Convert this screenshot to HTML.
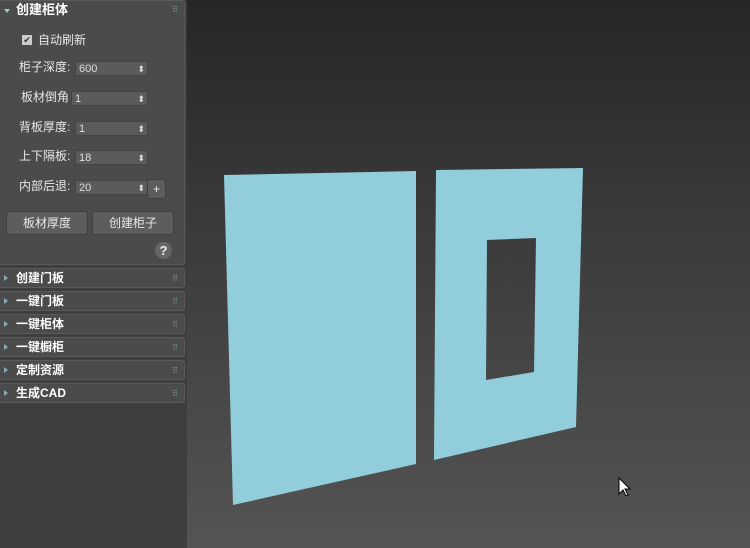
<!DOCTYPE html><html><head><style>
body{margin:0;width:750px;height:548px;overflow:hidden;font-family:"Liberation Sans","Noto Sans CJK SC",sans-serif;position:relative;background:#3c3c3c}
.vp{position:absolute;left:187px;top:0;width:563px;height:548px;background:linear-gradient(#262626,#3a3a3a 40%,#545454)}
.side{position:absolute;left:0;top:0;width:187px;height:548px;background:#3e3e3e}
.p{position:absolute;left:0;width:185px;background:#4b4b4b;border:1px solid #5a5a5a;border-left:none;box-sizing:border-box;border-radius:0 3px 3px 0}
.h{position:absolute;left:16px;color:#fff;font-weight:bold;font-size:12px;line-height:18px;top:0}
.tri{position:absolute;left:4px;width:0;height:0}
.dots{position:absolute;right:7px;color:#7a9aa0;font-size:8px;letter-spacing:-1px}
.lbl{position:absolute;color:#e8e8e8;font-size:12px;line-height:16px}
.in{position:absolute;height:13px;background:#5b5b5b;border:1px solid #444;color:#ddd;font-size:11px;line-height:14px;padding-left:3px;box-sizing:content-box}
.in:after{content:"⬍";position:absolute;right:2px;top:0;font-size:9px;color:#ddd}
.btn{position:absolute;height:22px;background:#5d5d5d;border:1px solid #3f3f3f;border-radius:3px;color:#e8e8e8;font-size:12px;text-align:center;line-height:22px}
</style></head><body>
<div class="vp"></div>
<svg style="position:absolute;left:0;top:0" width="750" height="548">
<polygon points="224,175 416,171 416,464 233,505" fill="#92cddb"/>
<path d="M436,170 L583,168 L576,427 L434,460 Z M487,240 L486,380 L534,372 L536,238 Z" fill="#92cddb" fill-rule="evenodd"/>
<path d="M619,478 L619,494 L623,490 L626,496 L628,495 L625,489 L630,489 Z" fill="#fff" stroke="#000" stroke-width="1"/>
</svg>
<div class="side">
<div class="p" style="top:0;height:265px">
<div class="tri" style="top:8px;border-left:3px solid transparent;border-right:3px solid transparent;border-top:4px solid #9cc"></div>
<div class="h" style="top:0;font-size:13px">创建柜体</div><div class="dots" style="top:4px">⠿</div>
<div style="position:absolute;left:22px;top:34px;width:10px;height:10px;background:#ccc;color:#333;font-size:9px;line-height:10px;text-align:center">✔</div>
<div class="lbl" style="left:38px;top:31px">自动刷新</div>
<div class="lbl" style="left:19px;top:58px">柜子深度:</div><div class="in" style="left:75px;top:60px;width:68px">600</div>
<div class="lbl" style="left:21px;top:88px">板材倒角</div><div class="in" style="left:71px;top:90px;width:72px">1</div>
<div class="lbl" style="left:19px;top:118px">背板厚度:</div><div class="in" style="left:75px;top:120px;width:68px">1</div>
<div class="lbl" style="left:19px;top:147px">上下隔板:</div><div class="in" style="left:75px;top:149px;width:68px">18</div>
<div class="lbl" style="left:19px;top:177px">内部后退:</div><div class="in" style="left:75px;top:179px;width:68px">20</div>
<div class="btn" style="left:147px;top:178px;width:17px;height:18px;line-height:18px">+</div>
<div class="btn" style="left:6px;top:210px;width:80px">板材厚度</div>
<div class="btn" style="left:92px;top:210px;width:80px">创建柜子</div>
<div style="position:absolute;left:155px;top:241px;width:17px;height:17px;border-radius:50%;background:#666;color:#eee;font-weight:bold;font-size:13px;text-align:center;line-height:17px">?</div>
</div>
<div class="p" style="top:268px;height:20px"><div class="tri" style="top:6px;border-top:3px solid transparent;border-bottom:3px solid transparent;border-left:4px solid #8ab"></div><div class="h">创建门板</div><div class="dots" style="top:5px">⠿</div></div>
<div class="p" style="top:291px;height:20px"><div class="tri" style="top:6px;border-top:3px solid transparent;border-bottom:3px solid transparent;border-left:4px solid #8ab"></div><div class="h">一键门板</div><div class="dots" style="top:5px">⠿</div></div>
<div class="p" style="top:314px;height:20px"><div class="tri" style="top:6px;border-top:3px solid transparent;border-bottom:3px solid transparent;border-left:4px solid #8ab"></div><div class="h">一键柜体</div><div class="dots" style="top:5px">⠿</div></div>
<div class="p" style="top:337px;height:20px"><div class="tri" style="top:6px;border-top:3px solid transparent;border-bottom:3px solid transparent;border-left:4px solid #8ab"></div><div class="h">一键橱柜</div><div class="dots" style="top:5px">⠿</div></div>
<div class="p" style="top:360px;height:20px"><div class="tri" style="top:6px;border-top:3px solid transparent;border-bottom:3px solid transparent;border-left:4px solid #8ab"></div><div class="h">定制资源</div><div class="dots" style="top:5px">⠿</div></div>
<div class="p" style="top:383px;height:20px"><div class="tri" style="top:6px;border-top:3px solid transparent;border-bottom:3px solid transparent;border-left:4px solid #8ab"></div><div class="h">生成CAD</div><div class="dots" style="top:5px">⠿</div></div>
</div>
</body></html>
